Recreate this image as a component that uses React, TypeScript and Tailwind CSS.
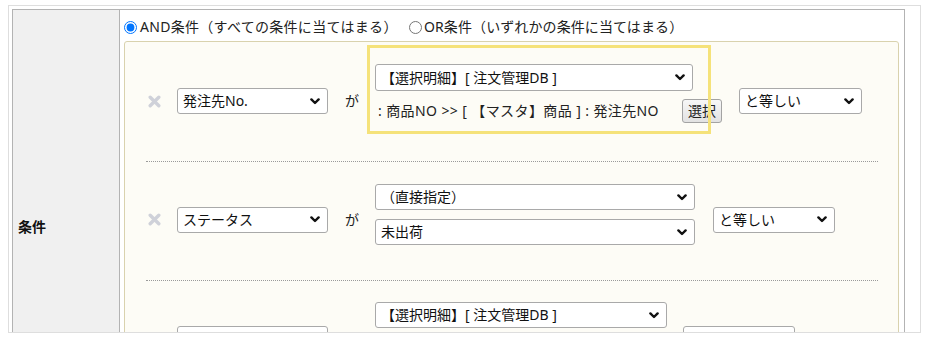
import React from 'react';

const Chevron = () => (
  <svg width="10" height="7" viewBox="0 0 10 7" className="shrink-0">
    <polyline points="1.4,1.4 5,5 8.6,1.4" fill="none" stroke="#111" strokeWidth="2.4" strokeLinecap="round" strokeLinejoin="round" />
  </svg>
);

const Remove = () => (
  <svg width="13" height="13" viewBox="0 0 13 13" className="shrink-0">
    <line x1="2.2" y1="2.2" x2="10.8" y2="10.8" stroke="#cfd1d9" strokeWidth="3.4" strokeLinecap="round" />
    <line x1="10.8" y1="2.2" x2="2.2" y2="10.8" stroke="#cfd1d9" strokeWidth="3.4" strokeLinecap="round" />
  </svg>
);

const Select: React.FC<{ className?: string; children: React.ReactNode }> = ({ className = '', children }) => (
  <div
    className={`flex items-center justify-between h-[26px] border border-[#a9a9a9] rounded-[3px] bg-white pl-[5px] pr-[7px] text-[14px] text-[#111] ${className}`}
  >
    <span className="leading-[20px] whitespace-nowrap overflow-hidden">{children}</span>
    <Chevron />
  </div>
);

const Ga = () => <span className="ml-[17px] w-[14px] text-[14px] leading-[20px] text-[#222]">が</span>;

export default function App() {
  return (
    <div className="w-[929px] h-[340px] bg-white pl-[8px] pt-[5px] font-['Noto_Sans','Noto_Sans_CJK_JP',sans-serif]">
      {/* clipped frame */}
      <div className="w-[913px] h-[328px] border border-[#dedede] overflow-hidden pl-[3px] pt-[3px]">
        <div className="w-[893px] flex border border-[#b3b3b3]">
          {/* label cell */}
          <div className="w-[107px] shrink-0 bg-[#f0f0f0] border-r border-[#b3b3b3] pl-[5px] pt-[204px]">
            <span className="text-[14px] font-bold leading-[20px] text-[#111]">条件</span>
          </div>

          {/* value cell */}
          <div className="flex-1 bg-white pl-[4px] pb-[20px]">
            {/* AND / OR */}
            <div className="mt-[7px] h-[20px] flex items-center text-[14px] leading-[20px] text-[#222]">
              <label className="w-[285px] flex items-center">
                <input type="radio" name="mode" defaultChecked className="m-0 w-[13px] h-[13px]" />
                <span className="ml-[3px] tracking-[0.3px]">AND条件（すべての条件に当てはまる）</span>
              </label>
              <label className="flex items-center">
                <input type="radio" name="mode" className="m-0 w-[13px] h-[13px]" />
                <span className="ml-[2px] tracking-[0.1px]">OR条件（いずれかの条件に当てはまる）</span>
              </label>
            </div>

            {/* condition box */}
            <div className="mt-[4px] w-[775px] border border-[#d9d2ae] rounded-[3px] bg-[#fdfcf6]">
              {/* row 1 */}
              <div className="pt-[22px] pb-[23px] pl-[23px] flex items-center">
                <Remove />
                <Select className="ml-[16px] w-[151px]">発注先No.</Select>
                <Ga />
                <div className="relative ml-[16px] w-[347px] pb-[15px]">
                  <Select className="w-[318px] h-[27px]">【選択明細】[ 注文管理DB ]</Select>
                  <div className="mt-[8px] h-[24px] flex items-center justify-between pl-[3px]">
                    <span className="text-[14px] leading-[20px] text-[#222] whitespace-nowrap tracking-[0.4px]">
                      : 商品NO &gt;&gt; [ 【マスタ】商品 ] : 発注先NO
                    </span>
                    <button className="w-[40px] h-[24px] border border-[#a3a3a3] rounded-[3px] bg-gradient-to-b from-[#f7f7f7] to-[#e2e2e2] text-[14px] leading-[20px] text-[#222]">
                      選択
                    </button>
                  </div>
                  {/* highlight annotation */}
                  <div className="absolute left-[-8px] top-[-19px] w-[344px] h-[89px] border-[3px] border-[#f5e27a] pointer-events-none" />
                </div>
                <Select className="ml-[17px] w-[123px]">と等しい</Select>
              </div>
              <div className="ml-[21px] mr-[20px] border-t border-dotted border-[#9a9a9a]" />

              {/* row 2 */}
              <div className="pt-[22px] pb-[25px] pl-[23px] flex items-center">
                <Remove />
                <Select className="ml-[16px] w-[151px]">ステータス</Select>
                <Ga />
                <div className="ml-[16px] w-[320px] pb-[10px] flex flex-col gap-[9px]">
                  <Select className="w-full">（直接指定）</Select>
                  <Select className="w-full">未出荷</Select>
                </div>
                <Select className="ml-[18px] w-[122px]">と等しい</Select>
              </div>
              <div className="ml-[21px] mr-[20px] border-t border-dotted border-[#9a9a9a]" />

              {/* row 3 */}
              <div className="pt-[21px] pb-[23px] pl-[23px] flex items-center">
                <Remove />
                <Select className="ml-[16px] w-[151px]">商品NO</Select>
                <Ga />
                <div className="ml-[16px] w-[292px] pb-[15px]">
                  <Select className="w-full">【選択明細】[ 注文管理DB ]</Select>
                  <div className="mt-[8px] h-[24px] flex items-center justify-between pl-[3px]">
                    <span className="text-[14px] leading-[20px] text-[#222] whitespace-nowrap">: 商品NO</span>
                    <button className="w-[40px] h-[24px] border border-[#a3a3a3] rounded-[3px] bg-gradient-to-b from-[#f7f7f7] to-[#e2e2e2] text-[14px] leading-[20px] text-[#222]">
                      選択
                    </button>
                  </div>
                </div>
                <Select className="ml-[16px] w-[112px]">と等しい</Select>
              </div>
            </div>
          </div>
        </div>
      </div>
    </div>
  );
}
